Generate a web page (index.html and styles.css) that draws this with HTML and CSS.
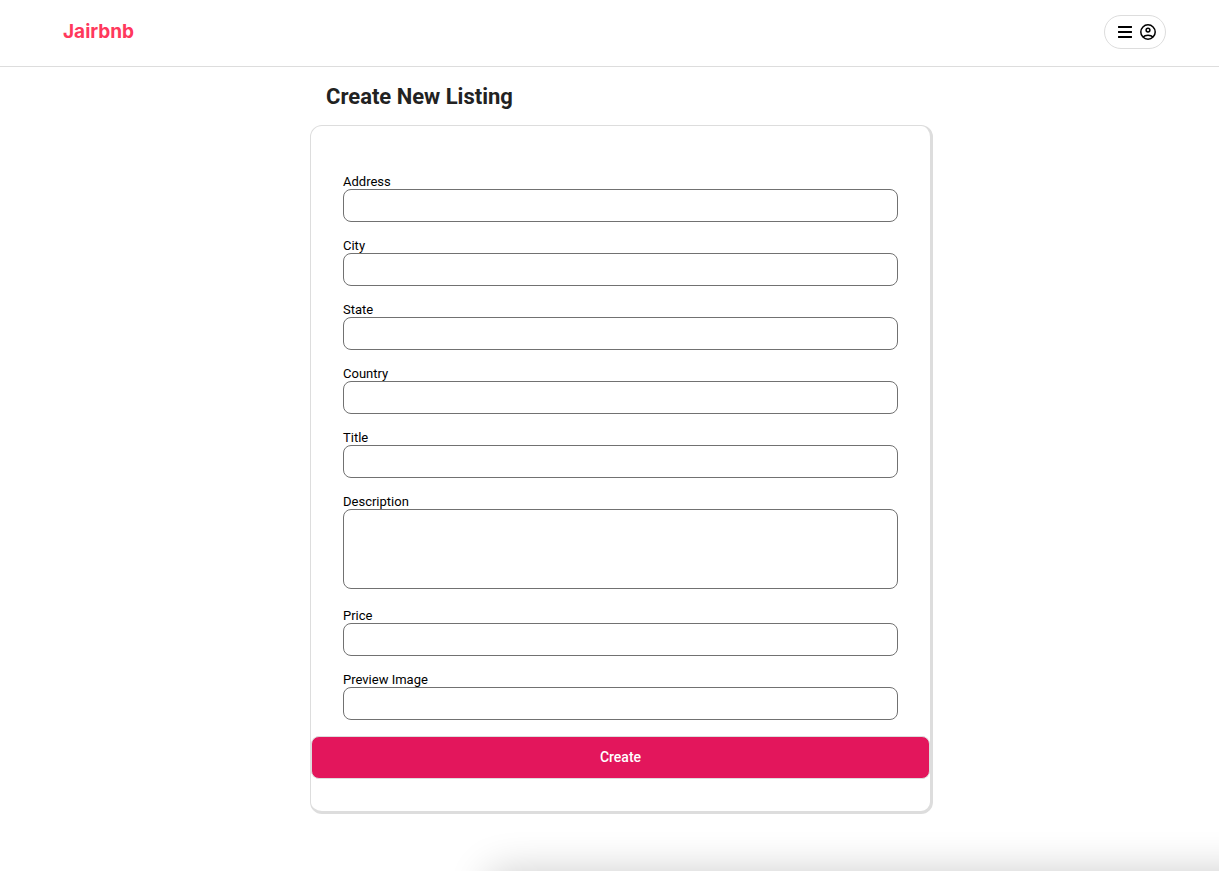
FILE: index.html
```html
<!DOCTYPE html>
<html lang="en">
<head>
<meta charset="utf-8">
<meta name="viewport" content="width=device-width, initial-scale=1">
<title>Jairbnb</title>
<link rel="stylesheet" href="styles.css">
</head>
<body>
<header class="site-header">
  <a class="logo" href="#">Jairbnb</a>
  <button class="profile-button" type="button" aria-label="Open user menu">
    <svg class="icon-bars" viewBox="0 0 14 12" aria-hidden="true"><path d="M.5 1h13M.5 6h13M.5 11h13" fill="none" stroke="#000" stroke-width="1.8" stroke-linecap="round"/></svg>
    <svg class="icon-user" viewBox="0 0 16 16" aria-hidden="true"><g fill="none" stroke="#000" stroke-width="1.5"><circle cx="8" cy="8" r="7.2"/><circle cx="8" cy="6.1" r="1.9"/><path d="M3 13.1C4.2 11.8 6 11.2 8 11.2s3.8.6 5 1.9"/></g></svg>
  </button>
</header>
<main class="page">
  <h1 class="page-title">Create New Listing</h1>
  <form class="listing-form">
    <div class="fields">
      <div class="field"><label for="address">Address</label><input id="address" type="text"></div>
      <div class="field"><label for="city">City</label><input id="city" type="text"></div>
      <div class="field"><label for="state">State</label><input id="state" type="text"></div>
      <div class="field"><label for="country">Country</label><input id="country" type="text"></div>
      <div class="field"><label for="title">Title</label><input id="title" type="text"></div>
      <div class="field field-tall"><label for="description">Description</label><textarea id="description"></textarea></div>
      <div class="field"><label for="price">Price</label><input id="price" type="text"></div>
      <div class="field"><label for="preview">Preview Image</label><input id="preview" type="text"></div>
    </div>
    <button class="submit-button" type="submit">Create</button>
  </form>
</main>
<div class="bottom-panel"></div>
</body>
</html>
```
FILE: styles.css
```css
* {
  box-sizing: border-box;
}

body {
  margin: 0;
  background: #fff;
  color: #000;
  font-family: Roboto, "Liberation Sans", sans-serif;
}

.site-header {
  display: flex;
  align-items: flex-start;
  justify-content: space-between;
  min-height: 67px;
  padding: 15px 53px 0 63px;
  border-bottom: 1px solid #ddd;
}

.logo {
  color: #ff385c;
  font-family: Inter, sans-serif;
  font-size: 19px;
  font-weight: 700;
  line-height: 34px;
  text-decoration: none;
}

.profile-button {
  display: flex;
  align-items: center;
  justify-content: center;
  gap: 8px;
  width: 62px;
  height: 34px;
  padding: 0 0 0 4px;
  border: 1px solid #ddd;
  border-radius: 17px;
  background: #fff;
  cursor: pointer;
}

.icon-bars {
  width: 14px;
  height: 12px;
}

.icon-user {
  width: 16px;
  height: 16px;
}

.page {
  max-width: 647px;
  margin: 0 auto;
  padding: 16px 0 56px 24px;
}

.page-title {
  margin: 0 0 14px 16px;
  color: #222;
  font-size: 22px;
  font-weight: 700;
  line-height: 28px;
}

.listing-form {
  padding: 48px 0 32px;
  border: solid #ddd;
  border-width: 1px 3px 3px 1px;
  border-radius: 12px;
}

.fields {
  display: flex;
  flex-direction: column;
  gap: 16px;
  padding: 0 32px 16px;
}

.field {
  display: flex;
  flex-direction: column;
}

.field-tall {
  padding-bottom: 3px;
}

.field label {
  font-size: 13px;
  line-height: 15px;
}

.field input,
.field textarea {
  display: block;
  width: 100%;
  height: 33px;
  margin: 0;
  padding: 4px 8px;
  border: 1px solid #717171;
  border-radius: 8px;
  background: #fff;
  font: inherit;
  font-size: 13px;
}

.field textarea {
  height: 80px;
  resize: none;
}

.submit-button {
  display: block;
  width: 100%;
  height: 43px;
  padding: 0 0 2px;
  border: 1px solid #ddd;
  border-radius: 8px;
  background: #e3165c;
  color: #fff;
  font: inherit;
  font-size: 14px;
  font-weight: 500;
  cursor: pointer;
}

.bottom-panel {
  position: fixed;
  top: 100%;
  right: -80px;
  left: 40%;
  height: 200px;
  border-radius: 12px;
  box-shadow: 0 0 40px rgba(0, 0, 0, 0.2);
}
```
